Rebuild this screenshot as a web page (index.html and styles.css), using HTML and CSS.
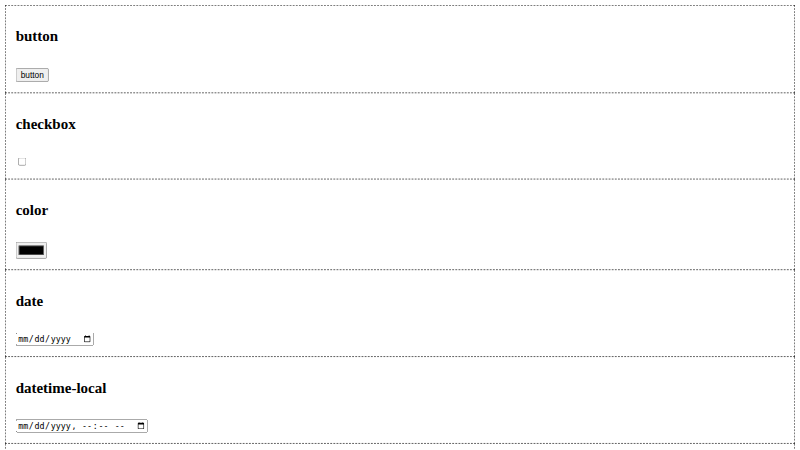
FILE: index.html
```html
<!DOCTYPE html>
<html>
<head>
  <meta charset="UTF-8">
  <title>Input types</title>
  <link rel="stylesheet" href="styles.css">
</head>
<body>
  <div class="case">
    <h2>button</h2>
    <input type="button" value="button">
  </div>
  <div class="case">
    <h2>checkbox</h2>
    <input type="checkbox">
  </div>
  <div class="case">
    <h2>color</h2>
    <input type="color">
  </div>
  <div class="case">
    <h2>date</h2>
    <input type="date">
  </div>
  <div class="case">
    <h2>datetime-local</h2>
    <input type="datetime-local">
  </div>
  <div class="case">
    <h2>email</h2>
    <input type="email">
  </div>
</body>
</html>
```

FILE: styles.css
```css
html { width: 1280px; transform: scale(0.625); transform-origin: 0 0; }
body { font-family: "Liberation Serif", serif; }
.case { border: 1px dashed #000; border-top: none; padding: 16px 16px 17px; }
.case:first-child { border-top: 1px dashed #000; }
h2 { margin: 0.83em 0 37px; }
input[type=button] { height: 22px; }
input[type=checkbox] { margin: 3px 3px 0 4px; }
```
